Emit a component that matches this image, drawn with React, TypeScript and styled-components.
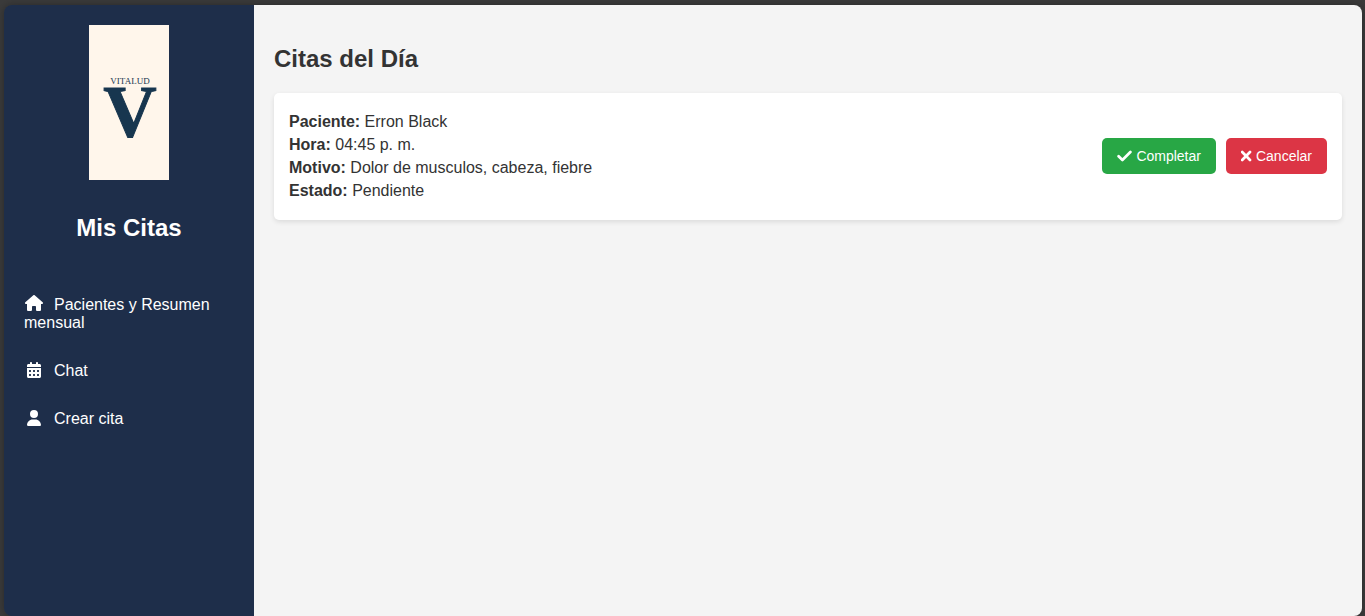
import React from "react";
import styled, { createGlobalStyle } from "styled-components";
import { FaCalendarDays, FaHouse, FaUser } from "react-icons/fa6";

const GlobalStyle = createGlobalStyle`
  * { box-sizing: border-box; }
  body {
    margin: 0;
    background: #3b3b3b;
    color: #333;
    font-family: Arial, "Liberation Sans", sans-serif;
    font-size: 16px;
  }
`;

const Page = styled.div`
  display: flex;
  min-height: 100vh;
  padding: 5px 3px 0 4px;
`;

const Shell = styled.div`
  display: flex;
  flex: 1;
  min-width: 0;
  border-radius: 8px;
  box-shadow: 0 0 8px rgba(0, 0, 0, 0.3);
`;

const Sidebar = styled.aside`
  display: flex;
  flex-direction: column;
  flex: 0 0 250px;
  padding: 20px;
  border-radius: 8px 0 0 8px;
  background: #1e2e4a;
  color: #fff;
`;

const Logo = styled.svg`
  display: block;
  align-self: center;
  width: 80px;
  height: 155px;
  background: #fff6eb;
  fill: #17364f;
  font-family: "Liberation Serif", serif;
`;

const Title = styled.h2`
  margin: 0;
  font-size: 24px;
  line-height: 28px;
`;

const SidebarTitle = styled(Title)`
  margin: 34px 0 38px;
  text-align: center;
`;

const NavList = styled.ul`
  margin: 0;
  padding: 0;
  list-style: none;
`;

const NavLink = styled.a`
  display: block;
  padding: 15px 0;
  color: #fff;
  line-height: 18px;
  text-decoration: none;
`;

const NavIcon = styled.span`
  display: inline-flex;
  align-items: center;
  justify-content: center;
  width: 20px;
  height: 16px;
  margin-right: 10px;
  vertical-align: -2px;

  svg {
    flex: none;
  }
`;

const Main = styled.main`
  flex: 1;
  min-width: 0;
  padding: 40px 20px 20px;
  border-radius: 0 8px 8px 0;
  background: #f4f4f4;
`;

const Card = styled.article`
  display: flex;
  align-items: center;
  justify-content: space-between;
  gap: 20px;
  margin-top: 20px;
  padding: 20px 15px;
  border-radius: 5px;
  background: #fff;
  box-shadow: 0 2px 5px rgba(0, 0, 0, 0.1);
`;

const Details = styled.div`
  display: grid;
  gap: 5px;
`;

const Detail = styled.p`
  margin: 0;
  line-height: 18px;
`;

const Actions = styled.div`
  display: flex;
  gap: 10px;
  padding-bottom: 1px;
`;

const ActionButton = styled.button<{ $color: string }>`
  display: flex;
  align-items: center;
  gap: 4px;
  padding: 10px 15px;
  border: 0;
  border-radius: 5px;
  background: ${(p) => p.$color};
  color: #fff;
  font-family: inherit;
  font-size: 14px;
  line-height: 16px;
  cursor: pointer;
`;

const ActionIcon = styled.svg`
  display: block;
  flex: none;
  fill: none;
  stroke: currentColor;
  stroke-width: 2.7;
  stroke-linecap: round;
  stroke-linejoin: round;
`;

const links = [
  { label: "Pacientes y Resumen mensual", icon: <FaHouse size={18} /> },
  { label: "Chat", icon: <FaCalendarDays size={16} /> },
  { label: "Crear cita", icon: <FaUser size={16} /> },
];

const details = [
  ["Paciente", "Erron Black"],
  ["Hora", "04:45 p. m."],
  ["Motivo", "Dolor de musculos, cabeza, fiebre"],
  ["Estado", "Pendiente"],
];

export default function App() {
  return (
    <Page>
      <GlobalStyle />
      <Shell>
        <Sidebar>
          <Logo viewBox="0 0 80 155" role="img" aria-label="Vitalud">
            <text x="41" y="59" fontSize="9" textAnchor="middle">VITALUD</text>
            <text x="41" y="112" fontSize="74" fontWeight="bold" textAnchor="middle" stroke="#17364f" strokeWidth="1">V</text>
          </Logo>
          <SidebarTitle>Mis Citas</SidebarTitle>
          <nav>
            <NavList>
              {links.map(({ label, icon }) => (
                <li key={label}>
                  <NavLink href="#">
                    <NavIcon>{icon}</NavIcon>
                    {label}
                  </NavLink>
                </li>
              ))}
            </NavList>
          </nav>
        </Sidebar>
        <Main>
          <Title>Citas del Día</Title>
          <Card>
            <Details>
              {details.map(([name, value]) => (
                <Detail key={name}>
                  <strong>{name}:</strong> {value}
                </Detail>
              ))}
            </Details>
            <Actions>
              <ActionButton type="button" $color="#28a745">
                <ActionIcon width="15" height="12" viewBox="0 0 15 12">
                  <path d="M1.6 6.2 5.4 10 13.4 2" />
                </ActionIcon>
                Completar
              </ActionButton>
              <ActionButton type="button" $color="#dc3545">
                <ActionIcon width="11" height="12" viewBox="0 0 11 12">
                  <path d="M1.2 2 9 10M9 2 1.2 10" />
                </ActionIcon>
                Cancelar
              </ActionButton>
            </Actions>
          </Card>
        </Main>
      </Shell>
    </Page>
  );
}
